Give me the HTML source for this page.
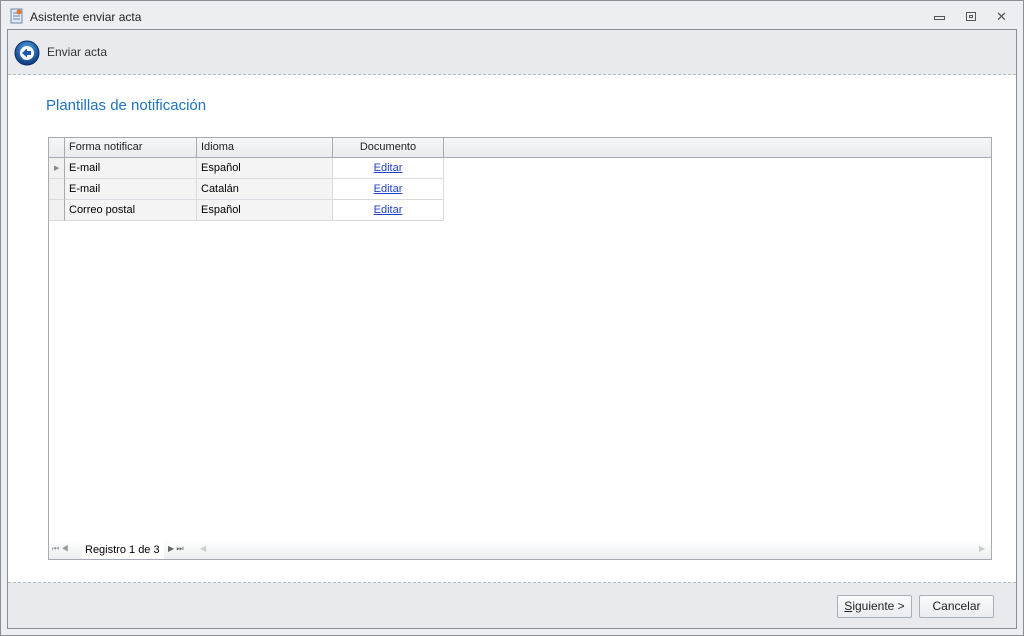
<!DOCTYPE html>
<html><head><meta charset="utf-8"><style>
*{box-sizing:border-box;margin:0;padding:0}
body{width:1024px;height:636px;background:#eef0f3;font-family:"Liberation Sans",sans-serif;font-size:11px;color:#000;position:relative;overflow:hidden}
.abs{position:absolute}
#win{left:0;top:0;width:1024px;height:636px;border:1px solid #8a8f96;background:#eceef1}
#panel{left:7px;top:29px;width:1010px;height:600px;border:1px solid #8a8f96;background:#e8eaee}
.dash{height:0;border-top:1px dashed #b5bcc6}
.cell{position:absolute;height:21px;line-height:21px;padding-left:4px;border-right:1px solid #d8dbe0;border-bottom:1px solid #d8dbe0}
.hd{position:absolute;top:0;height:20px;line-height:19px;padding-left:4px;border-right:1px solid #a6abb3;border-bottom:1px solid #a6abb3;background:linear-gradient(#f6f7f9,#e9ebee);color:#1e1e1e}
a{color:#1d3fc7;text-decoration:underline}
.btn{position:absolute;top:595px;height:23px;width:75px;border:1px solid #a9afb8;border-radius:2px;background:linear-gradient(#fafbfc,#e9ecf0);text-align:center;line-height:21px;font-size:12px;color:#222}
</style></head><body>
<div id="win" class="abs"></div>
<svg class="abs" style="left:10px;top:8px" width="14" height="16"><rect x="1" y="1" width="11" height="14" fill="#dfe8f3" stroke="#6e89ad"/><line x1="3" y1="5" x2="10" y2="5" stroke="#6e89ad"/><line x1="3" y1="8" x2="10" y2="8" stroke="#6e89ad"/><line x1="3" y1="11" x2="10" y2="11" stroke="#6e89ad"/><circle cx="9" cy="4" r="2.5" fill="#e07a2a"/></svg>
<div class="abs" style="left:30px;top:10px;font-size:12px;color:#222">Asistente enviar acta</div>
<div class="abs" style="left:934px;top:16px;width:11px;height:4px;border:1px solid #555"></div>
<div class="abs" style="left:966px;top:12px;width:10px;height:9px;border:1px solid #555"><div style="margin:2px;height:3px;border:1px solid #555"></div></div>
<div class="abs" style="left:996px;top:9px;font-size:13px;color:#555">✕</div>
<div id="panel" class="abs"></div>
<svg class="abs" style="left:14px;top:40px" width="26" height="26"><defs><radialGradient id="g" cx="50%" cy="35%" r="60%"><stop offset="0" stop-color="#5aa8e8"/><stop offset="1" stop-color="#0d3f86"/></radialGradient></defs><circle cx="13" cy="13" r="12" fill="url(#g)" stroke="#0a2f66"/><circle cx="13" cy="13" r="7" fill="#fff"/><path d="M8 13 L13 8.5 L13 11 L17 11 L17 15 L13 15 L13 17.5 Z" fill="#1a5aa8"/></svg>
<div class="abs" style="left:47px;top:45px;font-size:12px;color:#333">Enviar acta</div>
<div class="abs" style="left:8px;top:75px;width:1008px;height:507px;background:#fff"></div>
<div class="abs dash" style="left:8px;top:74px;width:1008px"></div>
<div class="abs dash" style="left:8px;top:582px;width:1008px"></div>
<div class="abs" style="left:46px;top:97px;font-size:15px;color:#1f73c1">Plantillas de notificación</div>
<div class="abs" style="left:48px;top:137px;width:944px;height:423px;border:1px solid #a6abb3;background:#fff">
 <div class="hd" style="left:0;width:942px;border-right:none"></div>
 <div class="hd" style="left:0;width:16px"></div>
 <div class="hd" style="left:16px;width:132px">Forma notificar</div>
 <div class="hd" style="left:148px;width:136px">Idioma</div>
 <div class="hd" style="left:284px;width:111px;text-align:center;padding:0">Documento</div>
 <div class="cell" style="left:0;top:20px;width:16px;background:#f1f1f1;border-right-color:#a6abb3"><span style="position:absolute;left:5px;top:0;font-size:7px;color:#888">▶</span></div>
 <div class="cell" style="left:16px;top:20px;width:132px;background:#f4f4f4">E-mail</div>
 <div class="cell" style="left:148px;top:20px;width:136px;background:#f4f4f4">Español</div>
 <div class="cell" style="left:284px;top:20px;width:111px;text-align:center;padding:0"><a>Editar</a></div>
 <div class="cell" style="left:0;top:41px;width:16px;background:#f1f1f1;border-right-color:#a6abb3"></div>
 <div class="cell" style="left:16px;top:41px;width:132px;background:#f4f4f4">E-mail</div>
 <div class="cell" style="left:148px;top:41px;width:136px;background:#f4f4f4">Catalán</div>
 <div class="cell" style="left:284px;top:41px;width:111px;text-align:center;padding:0"><a>Editar</a></div>
 <div class="cell" style="left:0;top:62px;width:16px;background:#f1f1f1;border-right-color:#a6abb3"></div>
 <div class="cell" style="left:16px;top:62px;width:132px;background:#f4f4f4">Correo postal</div>
 <div class="cell" style="left:148px;top:62px;width:136px;background:#f4f4f4">Español</div>
 <div class="cell" style="left:284px;top:62px;width:111px;text-align:center;padding:0"><a>Editar</a></div>
 <div class="abs" style="left:0;top:404px;width:942px;height:17px;background:linear-gradient(#fdfdfd,#eceef0)">
  <span class="abs" style="left:3px;top:2px;font-size:8px;color:#999">⏮ ◀</span>
  <span class="abs" style="left:33px;top:0;height:17px;width:82px;background:#fff;padding-left:3px;line-height:17px;font-size:11px">Registro 1 de 3</span>
  <span class="abs" style="left:119px;top:2px;font-size:8px;color:#666">▶ ⏭</span>
  <span class="abs" style="left:151px;top:2px;font-size:8px;color:#ccc">◀</span>
  <span class="abs" style="left:930px;top:2px;font-size:8px;color:#ccc">▶</span>
 </div>
</div>
<div class="btn" style="left:837px"><u>S</u>iguiente &gt;</div>
<div class="btn" style="left:919px">Cancelar</div>
</body></html>
